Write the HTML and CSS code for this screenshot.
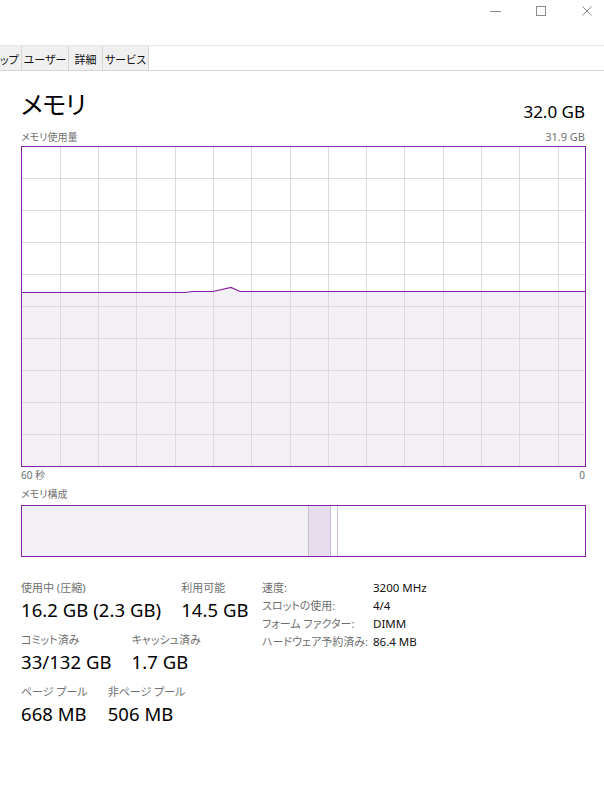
FILE: index.html
```html
<!DOCTYPE html>
<html lang="ja">
<head>
<meta charset="utf-8">
<title>タスク マネージャー - メモリ</title>
<link rel="stylesheet" href="styles.css">
</head>
<body>
<div class="titlebar">
  <svg class="tb-icon tb-min" width="11" height="11" viewBox="0 0 11 11"><line x1="0" y1="5.5" x2="11" y2="5.5" stroke="#8c8c8c" stroke-width="1"/></svg>
  <svg class="tb-icon tb-max" width="10" height="11" viewBox="0 0 10 11"><rect x="0.5" y="0.5" width="9" height="9" fill="none" stroke="#8c8c8c" stroke-width="1"/></svg>
  <svg class="tb-icon tb-close" width="10" height="11" viewBox="0 0 10 11"><path d="M0.5 0.5 L9.5 9.5 M9.5 0.5 L0.5 9.5" stroke="#8c8c8c" stroke-width="1" fill="none"/></svg>
</div>
<div class="tabs">
  <div class="tab tab-cut">ップ</div>
  <div class="tab tab-users">ユーザー</div>
  <div class="tab tab-details">詳細</div>
  <div class="tab tab-services">サービス</div>
  <div class="tab-rest"></div>
</div>
<main class="page">
  <div class="head">
    <h1 class="title">メモリ</h1>
    <div class="total">32.0 GB</div>
  </div>
  <div class="caption-row">
    <span>メモリ使用量</span>
    <span class="caption-num">31.9 GB</span>
  </div>
  <svg class="graph" width="565" height="321" viewBox="0 0 565 321">
    <polygon points="1,146 164,146 172,145 192,145 210,141 219,145 564,145 564,320 1,320" fill="#f2eff5"/>
    <g stroke="#dcdadd" stroke-width="1">
      <line x1="39.5" y1="1" x2="39.5" y2="320"/>
      <line x1="77.5" y1="1" x2="77.5" y2="320"/>
      <line x1="115.5" y1="1" x2="115.5" y2="320"/>
      <line x1="154.5" y1="1" x2="154.5" y2="320"/>
      <line x1="192.5" y1="1" x2="192.5" y2="320"/>
      <line x1="230.5" y1="1" x2="230.5" y2="320"/>
      <line x1="269.5" y1="1" x2="269.5" y2="320"/>
      <line x1="307.5" y1="1" x2="307.5" y2="320"/>
      <line x1="345.5" y1="1" x2="345.5" y2="320"/>
      <line x1="383.5" y1="1" x2="383.5" y2="320"/>
      <line x1="422.5" y1="1" x2="422.5" y2="320"/>
      <line x1="460.5" y1="1" x2="460.5" y2="320"/>
      <line x1="498.5" y1="1" x2="498.5" y2="320"/>
      <line x1="537.5" y1="1" x2="537.5" y2="320"/>
      <line x1="1" y1="32.5" x2="564" y2="32.5"/>
      <line x1="1" y1="64.5" x2="564" y2="64.5"/>
      <line x1="1" y1="96.5" x2="564" y2="96.5"/>
      <line x1="1" y1="128.5" x2="564" y2="128.5"/>
      <line x1="1" y1="160.5" x2="564" y2="160.5"/>
      <line x1="1" y1="192.5" x2="564" y2="192.5"/>
      <line x1="1" y1="224.5" x2="564" y2="224.5"/>
      <line x1="1" y1="256.5" x2="564" y2="256.5"/>
      <line x1="1" y1="288.5" x2="564" y2="288.5"/>
    </g>
    <polyline points="0.5,146.5 164,146.5 172,145.5 192,145.5 210,141.5 219,145.5 564.5,145.5" fill="none" stroke="#8a22a4" stroke-width="1.2"/>
    <rect x="0.5" y="0.5" width="564" height="320" fill="none" stroke="#8a22a4" stroke-width="1"/>
  </svg>
  <div class="axis-row">
    <span>60 秒</span>
    <span>0</span>
  </div>
  <div class="caption">メモリ構成</div>
  <div class="composition">
    <div class="seg seg-inuse" style="width:287px"></div>
    <div class="seg seg-modified" style="width:22px"></div>
    <div class="seg seg-standby" style="width:7px"></div>
    <div class="seg seg-free"></div>
  </div>
  <div class="stats">
    <div class="stats-main">
      <div class="stat-row">
        <div class="stat">
          <div class="stat-label">使用中 (圧縮)</div>
          <div class="stat-value">16.2 GB (2.3 GB)</div>
        </div>
        <div class="stat">
          <div class="stat-label">利用可能</div>
          <div class="stat-value">14.5 GB</div>
        </div>
      </div>
      <div class="stat-row">
        <div class="stat">
          <div class="stat-label">コミット済み</div>
          <div class="stat-value">33/132 GB</div>
        </div>
        <div class="stat">
          <div class="stat-label">キャッシュ済み</div>
          <div class="stat-value">1.7 GB</div>
        </div>
      </div>
      <div class="stat-row">
        <div class="stat">
          <div class="stat-label">ページ プール</div>
          <div class="stat-value">668 MB</div>
        </div>
        <div class="stat">
          <div class="stat-label">非ページ プール</div>
          <div class="stat-value">506 MB</div>
        </div>
      </div>
    </div>
    <dl class="stats-side">
      <dt>速度:</dt><dd>3200 MHz</dd>
      <dt>スロットの使用:</dt><dd>4/4</dd>
      <dt>フォーム ファクター:</dt><dd>DIMM</dd>
      <dt>ハードウェア予約済み:</dt><dd>86.4 MB</dd>
    </dl>
  </div>
</main>
</body>
</html>
```

FILE: styles.css
```css
* { box-sizing: border-box; }

html, body {
  margin: 0;
  padding: 0;
  background: #ffffff;
}

body {
  width: 604px;
  height: 792px;
  overflow: hidden;
  font-family: "Noto Sans", "Noto Sans CJK JP", sans-serif;
  font-feature-settings: "palt";
  color: #000;
}

/* title bar */
.titlebar {
  height: 45px;
  display: flex;
  justify-content: flex-end;
  align-items: flex-start;
  padding-right: 12px;
}
.tb-icon { display: block; margin-top: 6px; }
.tb-max { margin-left: 35px; }
.tb-close { margin-left: 36px; }

/* tabs */
.tabs {
  display: flex;
  height: 26px;
  border-top: 1px solid #e8e8e8;
  border-bottom: 1px solid #d5d5d5;
}
.tab {
  height: 24px;
  padding-top: 3px;
  background: #f0f0f0;
  border-right: 1px solid #d6d6d6;
  font-size: 11px;
  line-height: 21px;
  text-align: center;
  white-space: nowrap;
  color: #111;
}
.tab-cut {
  width: 22px;
  text-align: right;
  padding-right: 3px;
}
.tab-users { width: 47px; }
.tab-details { width: 34px; }
.tab-services { width: 46px; }
.tab-rest { flex: 1; }

/* page */
.page {
  padding: 0 19px 0 21px;
}

.head {
  display: flex;
  justify-content: space-between;
  align-items: flex-start;
  height: 25px;
  margin-top: 21px;
}
.title {
  margin: 0;
  font-size: 25px;
  line-height: 25px;
  font-weight: 400;
  letter-spacing: -0.5px;
}
.total {
  margin-top: 11px;
  font-size: 17px;
  line-height: 17px;
}

.caption-row,
.axis-row {
  display: flex;
  justify-content: space-between;
  font-size: 10px;
  line-height: 12px;
  color: #707070;
}
.caption-row { margin-top: 14px; }
.caption-num { font-size: 11px; }
.axis-row { margin-top: 2px; }

.graph {
  display: block;
  margin-top: 3px;
}

.caption {
  margin-top: 7px;
  font-size: 10px;
  line-height: 12px;
  color: #707070;
}

/* memory composition */
.composition {
  display: flex;
  margin-top: 5px;
  height: 52px;
  width: 565px;
  border: 1px solid #8a22a4;
}
.seg { height: 100%; }
.seg-inuse {
  background: #f2eff5;
  border-right: 1px solid #cdb8d6;
}
.seg-modified {
  background: #e6deec;
  border-right: 1px solid #cdb8d6;
}
.seg-standby {
  background: #ffffff;
  border-right: 1px solid #d3c0dc;
}
.seg-free {
  flex: 1;
  background: #ffffff;
}

/* stats */
.stats {
  display: flex;
  align-items: flex-start;
  margin-top: 24px;
}
.stats-main {
  width: 241px;
  display: flex;
  flex-direction: column;
  gap: 11px;
}
.stat-row {
  display: flex;
  gap: 20px;
}
.stat-label {
  font-size: 11px;
  line-height: 14px;
  color: #707070;
  white-space: nowrap;
}
.stat-value {
  margin-top: 3px;
  font-size: 18.5px;
  line-height: 24px;
  letter-spacing: 0.05px;
  white-space: nowrap;
}

.stats-side {
  display: grid;
  grid-template-columns: 111px auto;
  align-content: start;
  margin: -2px 0 0;
  font-size: 11px;
  line-height: 18px;
}
.stats-side dt {
  color: #707070;
  white-space: nowrap;
}
.stats-side dd {
  margin: 0;
  font-size: 11.5px;
  color: #111;
  white-space: nowrap;
}
```
